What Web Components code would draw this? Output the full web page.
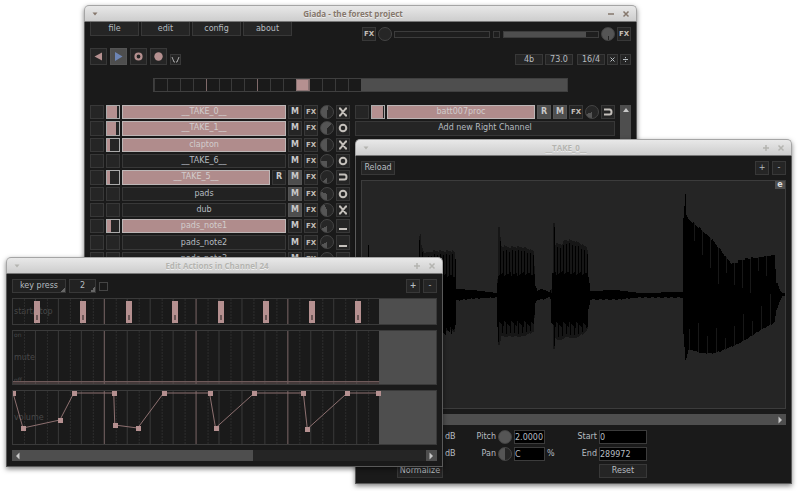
<!DOCTYPE html>
<html lang="en">
<head>
<meta charset="utf-8">
<title>Giada</title>
<style>
  html, body { margin: 0; height: 100%; background: #fff; overflow: hidden; }
  body { font: 8px/10px "DejaVu Sans", sans-serif; color: #b6bcc0; }
</style>
</head>
<body>
<g-desktop></g-desktop>
<script>
const BASE = `
  *, *::before, *::after { box-sizing: border-box; }
  button, input, select { font: inherit; color: inherit; margin: 0; padding: 0; border-radius: 0; outline: 0; appearance: none; min-width: 0; }
  button, select { background: #252525; border: 1px solid #383838; text-align: center; white-space: nowrap; }
  button { display: flex; align-items: center; justify-content: center; }
  svg { display: block; flex: none; }
  .on { background: #4e4e4e; border-color: #555; }
  .fx { font-size: 7px; font-weight: bold; color: #c4bfb8; }
  .b { font-weight: bold; color: #c8c8c8; }
  .sq { width: 14px; height: 14px; }
`;

class Part extends HTMLElement {
  connectedCallback() {
    if (this.shadowRoot) return;
    const t = document.createElement('template');
    t.innerHTML = `<style>${BASE}${this.css()}</style>${this.html()}`;
    this.attachShadow({ mode: 'open' }).append(t.content.cloneNode(true));
  }
  a(name, fallback = '') { return this.getAttribute(name) ?? fallback; }
  css() { return ''; }
  html() { return '<slot></slot>'; }
}

customElements.define('g-window', class extends Part {
  css() { return `
    :host { display: block; border-radius: 5px 5px 0 0; box-shadow: 0 2px 5px rgba(0,0,0,.5); }
    header { display: flex; align-items: center; height: 17px; padding: 0 5px; gap: 5px;
      border: 1px solid #a5a5a5; border-bottom-color: #777; border-radius: 5px 5px 0 0;
      background: linear-gradient(#e8e8e8, #cdcdcd); color: #b4b4b0; }
    :host([active]) header { color: #85776c; }
    h1 { flex: 1; margin: 0; text-align: center; font: bold 8px/12px "Open Sans", "Noto Sans", sans-serif; text-shadow: 0 1px 0 #eee; }
    header button { width: 10px; height: 10px; background: none; border: 0; }
    header svg { fill: none; stroke: currentColor; stroke-width: 1.5; }
    section { display: flex; flex-direction: column; background: #1a1a1a; border: 1px solid #5a5a5a; border-top: 0; padding: 5px; gap: 5px; }
    :host([flush]) section { padding-top: 0; gap: 0; }`; }
  html() { return `
    <header>
      <button aria-label="Window menu"><svg width="8" height="8" viewBox="0 0 8 8"><path d="M1.5 2.5h5L4 5.5z" fill="currentColor" stroke="none"/></svg></button>
      <h1>${this.a('title-text')}</h1>
      <button aria-label="Resize"><svg width="8" height="8" viewBox="0 0 8 8"><path d="${this.hasAttribute('active') ? 'M1 4h6' : 'M1 4h6M4 1v6'}"/></svg></button>
      <button aria-label="Close"><svg width="8" height="8" viewBox="0 0 8 8"><path d="M1.5 1.5l5 5M6.5 1.5l-5 5"/></svg></button>
    </header>
    <section><slot></slot></section>`; }
});

customElements.define('g-knob', class extends Part {
  css() { return `
    :host { display: block; width: 14px; height: 14px; }
    input { display: block; width: 14px; height: 14px; border-radius: 50%; border: 1px solid #454545;
      background: conic-gradient(from 180deg, #555 ${this.a('angle', '0')}deg, #262626 0); }
    input::-webkit-slider-thumb { appearance: none; width: 0; height: 0; }`; }
  html() { return `<input type="range" min="0" max="360" value="${this.a('angle', '0')}" aria-label="${this.a('label', 'Volume')}">`; }
});

customElements.define('g-menu', class extends Part {
  css() { return `
    nav { display: flex; gap: 2px; }
    button { width: 49px; height: 14px; border-top: 0; }`; }
  html() { return `<nav>${['file', 'edit', 'config', 'about'].map(t => `<button>${t}</button>`).join('')}</nav>`; }
});

customElements.define('g-master', class extends Part {
  css() { return `
    :host { display: flex; align-items: center; gap: 2px; padding-top: 5px; }
    .bar { width: 96px; height: 7px; background: #1e1e1e; border: 1px solid #3c3c3c; }
    .bar i { display: block; width: 87%; height: 100%; background: #4e4e4e; }
    .tiny { width: 7px; height: 7px; background: #1e1e1e; margin: 0 1px; }`; }
  html() { return `
    <button class="fx sq">FX</button><g-knob label="Input volume"></g-knob>
    <div class="bar" role="meter" aria-label="Input level"></div>
    <button class="tiny" aria-label="Monitor input"></button>
    <div class="bar" role="meter" aria-label="Output level"><i></i></div>
    <g-knob angle="347" label="Output volume"></g-knob><button class="fx sq">FX</button>`; }
});

customElements.define('g-transport', class extends Part {
  css() { return `
    :host { display: flex; align-items: flex-end; justify-content: space-between; margin-top: 7px; }
    div { display: flex; align-items: flex-end; gap: 3px; }
    .t { width: 17px; height: 17px; }
    .s { width: 28px; height: 11px; }
    .x { width: 11px; height: 11px; }
    .m { width: 11px; height: 11px; }
    .last { margin-right: 2px; }
    .tempo { gap: 2px; }`; }
  html() {
    const ic = (d) => `<svg width="11" height="11" viewBox="0 0 11 11">${d}</svg>`;
    return `
    <div>
      <button class="t" aria-label="Rewind">${ic('<path d="M1.5 5.5L9 1.5v8z" fill="#b59090"/>')}</button>
      <button class="t on" aria-label="Play">${ic('<path d="M9.5 5.5L2 1v9z" fill="#6d85b5"/>')}</button>
      <button class="t" aria-label="Record actions">${ic('<circle cx="5.5" cy="5.5" r="3" fill="none" stroke="#b59090" stroke-width="2.2"/>')}</button>
      <button class="t" aria-label="Record input">${ic('<circle cx="5.5" cy="5.5" r="4.2" fill="#b59090"/>')}</button>
      <button class="m" aria-label="Metronome"><svg width="9" height="9" viewBox="0 0 9 9"><path d="M1 2l2 5h1M8 2L6 7H5" fill="none" stroke="#a9a9a9"/></svg></button>
    </div>
    <div class="tempo">
      <button class="s">4b</button><button class="s last">73.0</button>
      <button class="s">16/4</button>
      <button class="x" aria-label="Multiply"><svg width="7" height="7" viewBox="0 0 7 7"><path d="M1.500 1.500l4 4M5.500 1.500l-4 4" stroke="#b6bcc0"/></svg></button>
      <button class="x" aria-label="Divide"><svg width="7" height="7" viewBox="0 0 7 7"><path d="M1 3.500h5M3.500 1v1.200M3.500 4.800v1.200" stroke="#b6bcc0"/></svg></button>
    </div>`;
  }
});

customElements.define('g-beats', class extends Part {
  css() { return `
    :host { display: grid; grid-template-columns: repeat(32, 1fr); height: 14px; margin: 13px 63px; border: 1px solid #3f3f3f; }
    i { border-left: 1px solid #3a3a3a; }
    i:first-child { border-color: transparent; }
    i.bar { border-color: #806a6a; }
    i.now { background: #b59090; border: 1px solid #8a7474; }
    .off { grid-column: 17 / -1; background: #4e4e4e; }`; }
  html() {
    let s = '';
    for (let n = 0; n < 16; n++) s += `<i class="${n === 11 ? 'now' : n && n % 4 === 0 ? 'bar' : ''}"></i>`;
    return s + '<span class="off"></span>';
  }
});

const MODES = {
  x: '<path d="M1 1.500h1.200L7.800 8.500H9M9 1.500H7.800L2.200 8.500H1"/>',
  o: '<circle cx="5" cy="5" r="3.300"/>',
  u: '<path d="M1 2.500h5.500q2 0 2 2.500t-2 2.500H1"/>',
  _: '<path d="M1 8h8"/>'
};
customElements.define('g-channel', class extends Part {
  css() { return `
    :host { display: flex; gap: 2px; min-height: 0; }
    button { height: 100%; }
    .sq { flex: none; height: 100%; }
    .lv { background: #252525; border: 1px solid #383838; }
    .lv i { display: block; height: 100%; background: #b59090; }
    .name { flex: 1; background: #222; }
    :host([playing]) .lv { border-color: #aaa; }
    :host([playing]) .name { background: #b08c8c; border-color: #bdb6b6; color: #d2cccc; }
    .mode svg { fill: none; stroke: #c4c0bb; stroke-width: 2; }`; }
  html() { return `
    <button class="sq" aria-label="Play ${this.a('name')}"></button>
    <div class="lv sq" role="meter" aria-label="Progress"><i style="width:${this.a('level', '0')}%"></i></div>
    <button class="name">${this.a('name')}</button>
    ${this.hasAttribute('r') ? `<button class="b sq ${this.a('r')}">R</button>` : ''}
    <button class="b sq ${this.a('m')}">M</button>
    <button class="fx sq">FX</button>
    <g-knob angle="${this.a('vol')}"></g-knob>
    <button class="mode sq" aria-label="Mode"><svg width="10" height="10" viewBox="0 0 10 10">${MODES[this.a('mode')]}</svg></button>`; }
});

customElements.define('g-keyboard', class extends Part {
  css() { return `
    :host { display: grid; grid-template-columns: 1fr 1fr 11px; gap: 5px; }
    .col { display: grid; grid-template-rows: repeat(10, 1fr); gap: 2px; height: 161px; }
    .bar { background: #4e4e4e; display: flex; justify-content: center; padding-top: 3px; }
    .add { height: 100%; }`; }
  html() { return `
    <div class="col">
      <g-channel playing name="__TAKE_0__" level="85" vol="195" mode="x"></g-channel>
      <g-channel playing name="__TAKE_1__" level="72" vol="230" mode="o"></g-channel>
      <g-channel playing name="clapton" level="24" vol="178" mode="x"></g-channel>
      <g-channel name="__TAKE_6__" vol="95" mode="o"></g-channel>
      <g-channel playing name="__TAKE_5__" level="22" r="" m="on" vol="40" mode="u"></g-channel>
      <g-channel name="pads" m="on" vol="110" mode="o"></g-channel>
      <g-channel name="dub" m="on" vol="155" mode="x"></g-channel>
      <g-channel playing name="pads_note1" level="34" vol="65" mode="_"></g-channel>
      <g-channel name="pads_note2" vol="65" mode="_"></g-channel>
      <g-channel name="pads_note3" vol="65" mode="_"></g-channel>
    </div>
    <div class="col">
      <g-channel playing name="batt007proc" level="88" r="on" m="on" vol="70" mode="u"></g-channel>
      <button class="add">Add new Right Channel</button>
    </div>
    <div class="bar"><svg width="6" height="5" viewBox="0 0 6 5"><path d="M0 4L3 0l3 4z" fill="#c8c8c8"/></svg></div>`; }
});

customElements.define('g-scroll', class extends Part {
  css() { return `
    :host { display: flex; height: 11px; background: #252525; }
    .thumb { background: #4e4e4e; width: ${this.a('size', '100')}%; }
    button { width: 11px; height: 11px; flex: none; border: 0; background: #4e4e4e; }
    .rest { flex: 1; }`; }
  html() { return `
    <button aria-label="Scroll left"><svg width="5" height="8" viewBox="0 0 5 8"><path d="M4.500 .5L1 4l3.500 3.500z" fill="#c8c8c8"/></svg></button>
    <span class="thumb"></span><span class="rest"></span>
    <button aria-label="Scroll right"><svg width="5" height="8" viewBox="0 0 5 8"><path d="M.5 .5L4 4 .5 7.500z" fill="#c8c8c8"/></svg></button>`; }
});

customElements.define('g-lane', class extends Part {
  css() { return `
    :host { display: grid; grid-template-areas: "a"; border: 1px solid #3a3a3a; color: #484848; height: ${this.a('rows') === 'small' ? 27 : 55}px; }
    svg, span { grid-area: a; }
    svg { width: 100%; height: 100%; min-height: 0; z-index: 1; shape-rendering: crispEdges; }
    span { padding-left: 1px; align-self: center; }
    .lo, .hi { font-size: 6px; line-height: 8px; }
    .hi { align-self: start; } .lo { align-self: end; }`; }
  html() {
    const kind = this.a('kind'), h = kind === 'key' ? 25 : 53, pink = '#b59090';
    let g = '';
    for (let n = 1; n < 32; n++) {
      const x = Math.round(n * 11.5) - .5;
      const style = n % 8 === 0 ? 'stroke="#7a6666"' : n % 2 === 0 ? 'stroke="#3a3a3a"' : 'stroke="#2d2d2d" stroke-dasharray="2 1"';
      g += `<path d="M${x} 0V${h}" ${style}/>`;
    }
    g += `<rect x="367" width="57" height="${h}" fill="#4e4e4e"/>`;
    let labels = `<span>${this.a('name')}</span>`;
    if (kind === 'key') {
      for (let n = 0; n < 8; n++) {
        const x = 21 + 46 * n;
        g += `<rect x="${x}" y="2" width="6" height="22" fill="${pink}"/><rect x="${x + 2}" y="16" width="2" height="5" fill="#6c5757"/>`;
      }
    }
    if (kind === 'mute') {
      g += '<path d="M0 50.500H367M0 52H367" stroke="#6f5a5a"/>';
      labels += '<span class="hi">on</span><span class="lo">off</span>';
    }
    if (kind === 'env') {
      const p = [[0,2],[10,37],[47,29],[61,2],[101,2],[102,34],[125,37],[151,2],[197,2],[203,37],[242,2],[291,2],[295,38],[335,2],[366,2]];
      g += `<polyline points="${p.join(' ')}" fill="none" stroke="#8e7070" shape-rendering="auto"/>`;
      g += p.map(([x, y]) => `<rect x="${x - 2}" y="${y - 2}" width="5" height="5" fill="${pink}"/>`).join('');
    }
    return `${labels}<svg viewBox="0 0 424 ${h}" preserveAspectRatio="none" aria-hidden="true">${g}</svg>`;
  }
});

customElements.define('g-actions', class extends Part {
  css() { return `
    :host { display: flex; flex-direction: column; gap: 5px; }
    .bar { display: flex; align-items: center; gap: 3px; height: 14px; }
    select { height: 14px; background: linear-gradient(135deg, transparent 50%, #666 50%) right bottom / 5px 5px no-repeat #222; }
    .kind { width: 54px; } .grid { width: 27px; }
    input { width: 9px; height: 9px; border: 1px solid #454545; }
    .grow { flex: 1; }`; }
  html() { return `
    <div class="bar">
      <select class="kind" aria-label="Action type"><option>key press</option></select>
      <select class="grid" aria-label="Grid"><option>2</option></select>
      <input type="checkbox" aria-label="Snap to grid">
      <span class="grow"></span>
      <button class="sq" aria-label="Zoom in"><b>+</b></button>
      <button class="sq" aria-label="Zoom out">-</button>
    </div>
    <g-lane kind="key" rows="small" name="start/stop"></g-lane>
    <g-lane kind="mute" name="mute"></g-lane>
    <g-lane kind="env" name="volume"></g-lane>
    <g-scroll size="54"></g-scroll>`; }
});

/* Envelopes are [x, upper, lower] breakpoints, measured in rows above and below the centre line. */
const ENVELOPE = [
  [6,4,4],[7,50,50],[8,38,38],[30,38,38],[34,5,5],[57,3,3],[58,61,50],[59,61,50],[60,50,42],[63,43,36],[73,45,36],[90,45,36],
  [93,44,37],[93.9,40,33],[95,6,6],[112,5,4],[135,2,3],[136,18,18],[137,68,50],[138,68,50],[140,50,42],[146,49,42],[162,49,42],[172,45,37],
  [173,30,24],[174,9,9],[176,4,5],[180,6,5],[188,3,3],[190,6,6],[191,20,24],[192,73,55],[193,73,55],[194,52,44],[200,52,46],[204,56,42],[214,55,44],
  [225,49,37],[226,47,35],[227,20,15],[229,4,5],[255,5,5],[278,2,3],[321,3,3],[322,78,40],[324,103,66],[325,80,63],[327,77,55],[339,67,58],
  [349,58,59],[359,46,57],[365,38,54],[371,32,52],[383,37,46],[400,39,35],[413,41,28],[415,14,16],[419,4,5],[421,2,2],[425,1,1]
];
const CORES = [[57,93,17,34],[136,173,19,26],[190,226,20,27]];
customElements.define('g-wave', class extends Part {
  css() { return `
    :host { display: grid; grid-template-areas: "a"; border: 1px solid #3c3c3c; background: #252525; height: 229px; }
    svg, button { grid-area: a; }
    svg { width: 100%; height: 100%; min-height: 0; }
    button { justify-self: end; align-self: start; width: 10px; height: 8px; border: 0; background: #4e4e4e; color: #ddd; font-weight: bold; line-height: 8px; }`; }
  html() {
    let dark = '', soft = '', gap = '';
    const mid = 114;
    for (let x = 6; x < 424; x++) {
      let i = ENVELOPE.findIndex(e => e[0] > x) - 1;
      if (i < 0) i = 0;
      const [x0, u0, l0] = ENVELOPE[i], [x1, u1, l1] = ENVELOPE[i + 1], t = (x - x0) / (x1 - x0);
      const r = (x * 7919 % 13) / 13, px = x - 1;
      const u = Math.round(u0 + (u1 - u0) * t - (u0 > 10 ? r * 2 : 0)), l = Math.round(l0 + (l1 - l0) * t - r);
      const bar = (a, b) => `M${px} ${mid - a}h1V${mid + b}h-1z`;
      const core = CORES.find(c => x >= c[0] && x <= c[1]);
      if (core) {
        soft += bar(u, l);
        dark += bar(x % 3 === 1 ? u - 4 : core[2] + r * 4, x % 4 === 1 ? l - 3 : core[3] + r * 6);
      } else {
        dark += bar(u, l);
        if (x > 326 && x < 413 && x * 5 % 8 === 1) gap += `M${px} ${mid - u}h1v${Math.round(12 + r * 26)}h-1z`;
        if (x > 326 && x < 413 && x * 5 % 9 === 2) gap += `M${px} ${mid + l}h1v${-Math.round(12 + r * 20)}h-1z`;
      }
    }
    return `<svg viewBox="0 0 423 227" preserveAspectRatio="none" shape-rendering="crispEdges" role="img" aria-label="Waveform">
      <path d="${soft}" fill="#161616"/><path d="${dark}" fill="#000"/><path d="${gap}" fill="#181818"/></svg>
      <button aria-label="Range end">e</button>`;
  }
});

customElements.define('g-sample-editor', class extends Part {
  css() { return `
    :host { display: flex; flex-direction: column; gap: 5px; }
    .bar { display: flex; gap: 3px; }
    .bar button:first-child { width: 34px; height: 14px; margin-right: auto; }
    form { display: grid; grid-template-columns: 34px 46px 24px 25px 14px 31px 24px 24px 48px; grid-auto-rows: 14px; gap: 3px 2px; align-items: center; }
    form input { width: 100%; height: 14px; background: #000; border: 1px solid #3c3c3c; }
    .db { grid-column: 3; } label { text-align: right; }
    .p { grid-column: 4; } .s { grid-column: 8; }
    form button { height: 14px; } .n { grid-column: 2; } .r { grid-column: 9; }`; }
  html() { return `
    <div class="bar"><button>Reload</button><button class="sq" aria-label="Zoom in">+</button><button class="sq" aria-label="Zoom out">-</button></div>
    <g-wave></g-wave>
    <g-scroll></g-scroll>
    <form>
      <span class="db">dB</span><label class="p" for="pitch">Pitch</label><g-knob angle="360" label="Pitch"></g-knob><input id="pitch" value="2.0000">
      <label class="s" for="start">Start</label><input id="start" value="0">
      <span class="db">dB</span><label class="p" for="pan">Pan</label><g-knob angle="180" label="Pan"></g-knob><input id="pan" value="C"><span>%</span>
      <label class="s" for="end">End</label><input id="end" value="289972">
      <button type="button" class="n">Normalize</button><button type="button" class="r">Reset</button>
    </form>`; }
});

customElements.define('g-desktop', class extends Part {
  css() { return `
    :host { display: block; position: relative; height: 100%; }
    g-window { position: absolute; }
    .main { left: 84px; right: 163px; top: 5px; }
    .sample { left: 355px; right: 8px; top: 139px; }
    .acts { left: 6px; right: 357px; top: 257px; }
    .head { display: flex; justify-content: space-between; align-items: flex-start; }`; }
  html() { return `
    <g-window class="main" active flush title-text="Giada - the forest project">
      <div class="head"><g-menu></g-menu><g-master></g-master></div>
      <g-transport></g-transport>
      <g-beats></g-beats>
      <g-keyboard></g-keyboard>
    </g-window>
    <g-window class="sample" title-text="__TAKE_0__"><g-sample-editor></g-sample-editor></g-window>
    <g-window class="acts" title-text="Edit Actions in Channel 24"><g-actions></g-actions></g-window>`; }
});
</script>
</body>
</html>
